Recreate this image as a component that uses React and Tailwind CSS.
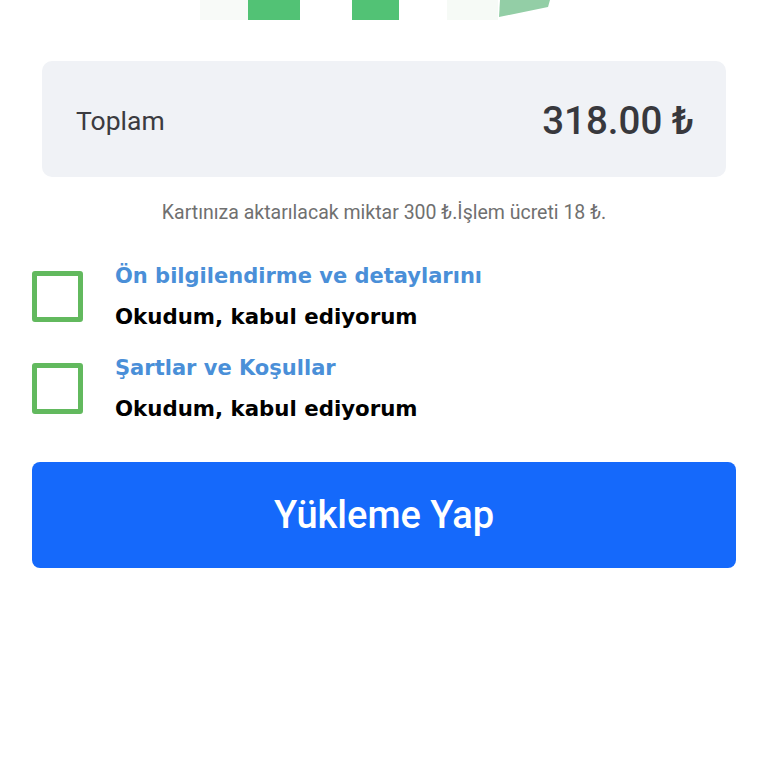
export default function App() {
  const roboto = { fontFamily: "Roboto, 'Liberation Sans', sans-serif" };
  return (
    <div className="w-[768px] h-[768px] bg-white overflow-hidden relative">
      <svg width="768" height="21" viewBox="0 0 768 21" className="block">
        <rect x="200" y="0" width="48" height="20" fill="#f8faf8" />
        <rect x="248" y="0" width="52" height="20" fill="#52c275" />
        <rect x="352" y="0" width="47" height="20" fill="#52c275" />
        <rect x="447" y="0" width="51" height="20" fill="#f6faf6" />
        <polygon points="500,0 550,0 548,7 499,17" fill="#93cea6" />
      </svg>
      <div className="mx-[42px] mt-[40px] h-[116px] rounded-[10px] bg-[#f0f2f6] flex items-center justify-between pl-[34px] pr-[32px] pt-[4px]" style={roboto}>
        <span className="text-[26.5px] text-[#3b3b40]">Toplam</span>
        <span className="text-[38.5px] font-medium text-[#38383d]">318.00 ₺</span>
      </div>
      <div className="mt-[24px] text-center text-[19.5px] leading-[24px] text-[#707070]" style={roboto}>
        Kartınıza aktarılacak miktar 300 ₺.İşlem ücreti 18 ₺.
      </div>
      <div className="mt-[36px] flex flex-col gap-[21px] pl-[32px]" style={{ fontFamily: "'DejaVu Sans', Inter, sans-serif" }}>
        {["Ön bilgilendirme ve detaylarını", "Şartlar ve Koşullar"].map((t) => (
          <div key={t} className="flex items-center">
            <div className="w-[51px] h-[51px] border-[5px] border-[#62b95e] rounded-[3px] shrink-0" />
            <div className="ml-[32px] flex flex-col">
              <span className="text-[21px] font-bold text-[#4a8fd8] leading-[30px]">{t}</span>
              <span className="text-[21.3px] font-bold text-black leading-[30px] mt-[11px]">Okudum, kabul ediyorum</span>
            </div>
          </div>
        ))}
      </div>
      <div className="mx-[32px] mt-[38px] h-[106px] rounded-[8px] bg-[#1569fb] flex items-center justify-center" style={roboto}>
        <span className="text-[38px] font-medium text-white">Yükleme Yap</span>
      </div>
    </div>
  );
}
